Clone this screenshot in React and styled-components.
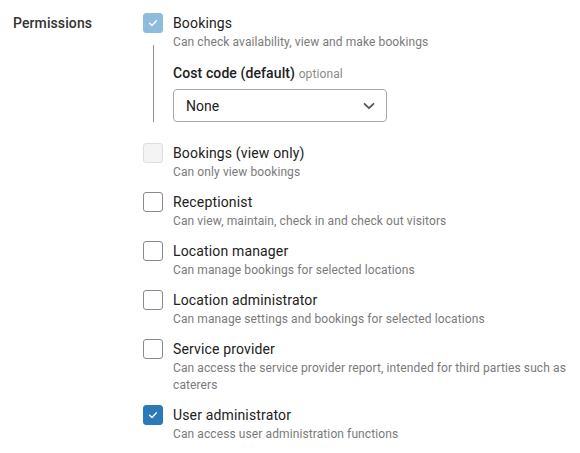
import React from "react";
import styled, { createGlobalStyle } from "styled-components";

const GlobalStyle = createGlobalStyle`
  body {
    margin: 0;
    background: #fff;
    font-family: Roboto, "Liberation Sans", sans-serif;
    color: #212121;
  }
`;

const permissions = [
  {
    title: "Bookings (view only)",
    desc: "Can only view bookings",
    state: "disabled",
  },
  {
    title: "Receptionist",
    desc: "Can view, maintain, check in and check out visitors",
  },
  {
    title: "Location manager",
    desc: "Can manage bookings for selected locations",
  },
  {
    title: "Location administrator",
    desc: "Can manage settings and bookings for selected locations",
  },
  {
    title: "Service provider",
    desc: "Can access the service provider report, intended for third parties such as caterers",
  },
  {
    title: "User administrator",
    desc: "Can access user administration functions",
    state: "checked",
  },
];

function Checkbox({ state }) {
  return (
    <SBox $state={state}>
      {(state === "checked" || state === "checkedDisabled") && (
        <svg width="12" height="12" viewBox="0 0 12 12">
          <path
            d="M2.6 6.2 L5 8.4 L9.4 3.8"
            fill="none"
            stroke="#fff"
            strokeWidth="1.4"
            strokeLinecap="round"
            strokeLinejoin="round"
          />
        </svg>
      )}
    </SBox>
  );
}

export default function App() {
  return (
    <>
      <GlobalStyle />
      <SForm>
        <SLabel>Permissions</SLabel>
        <SList>
          {/* bookings with nested cost code */}
          <SRow>
            <SCheckCol>
              <Checkbox state="checkedDisabled" />
              <SLine />
            </SCheckCol>
            <div>
              <STitle>Bookings</STitle>
              <SDesc>Can check availability, view and make bookings</SDesc>
              <SFieldLabel>
                Cost code (default) <span>optional</span>
              </SFieldLabel>
              <SSelect>
                <span>None</span>
                <svg width="14" height="14" viewBox="0 0 14 14">
                  <path
                    d="M2.5 4.8 L7 9.2 L11.5 4.8"
                    fill="none"
                    stroke="#555"
                    strokeWidth="1.8"
                    strokeLinecap="round"
                    strokeLinejoin="round"
                  />
                </svg>
              </SSelect>
            </div>
          </SRow>
          {permissions.map((p) => (
            <SRow key={p.title}>
              <SCheckCol>
                <Checkbox state={p.state} />
              </SCheckCol>
              <div>
                <STitle>{p.title}</STitle>
                <SDesc>{p.desc}</SDesc>
              </div>
            </SRow>
          ))}
        </SList>
      </SForm>
    </>
  );
}

//styled components
const SForm = styled.div`
  display: grid;
  grid-template-columns: 129px 1fr;
  padding: 13px 0 0 13px;
`;
const SLabel = styled.div`
  font-size: 14px;
  line-height: 20px;
  font-weight: 500;
  color: #333;
  letter-spacing: 0.1px;
`;
const SList = styled.div`
  display: flex;
  flex-direction: column;
  gap: 11px;
`;
const SRow = styled.div`
  display: flex;
  gap: 10px;
  width: 430px;
  &:first-child {
    margin-bottom: 10px;
  }
`;
const SCheckCol = styled.div`
  display: flex;
  flex-direction: column;
  align-items: center;
  width: 20px;
  flex-shrink: 0;
  margin-left: 1px;
`;
const boxColors = {
  checked: "background: #2a7ab8; border-color: #2a7ab8;",
  checkedDisabled: "background: #8dbcdd; border-color: #8dbcdd;",
  disabled: "background: #f4f4f4; border-color: #dedede;",
};
const SBox = styled.div`
  box-sizing: border-box;
  width: 20px;
  height: 20px;
  border: 1px solid #8a8a8a;
  border-radius: 3px;
  background: #fff;
  display: flex;
  align-items: center;
  justify-content: center;
  ${(p) => boxColors[p.$state] || ""}
`;
const SLine = styled.div`
  flex: 1;
  width: 1px;
  margin-top: 12px;
  background: #8f8f8f;
`;
const STitle = styled.div`
  font-size: 14px;
  line-height: 20px;
  color: #212121;
  letter-spacing: 0.15px;
`;
const SDesc = styled.div`
  padding-top: 1px;
  font-size: 12px;
  line-height: 17px;
  color: #7a7a7a;
  letter-spacing: 0.1px;
`;
const SFieldLabel = styled.div`
  margin-top: 12px;
  font-size: 14px;
  line-height: 20px;
  font-weight: 500;
  color: #212121;
  letter-spacing: 0.1px;
  span {
    font-size: 12px;
    font-weight: 400;
    color: #8a8a8a;
  }
`;
const SSelect = styled.div`
  box-sizing: border-box;
  margin-top: 5px;
  width: 214px;
  height: 33px;
  border: 1px solid #a8a8a8;
  border-radius: 4px;
  display: flex;
  align-items: center;
  justify-content: space-between;
  padding: 0 10px 0 12px;
  font-size: 14px;
  color: #212121;
`;
